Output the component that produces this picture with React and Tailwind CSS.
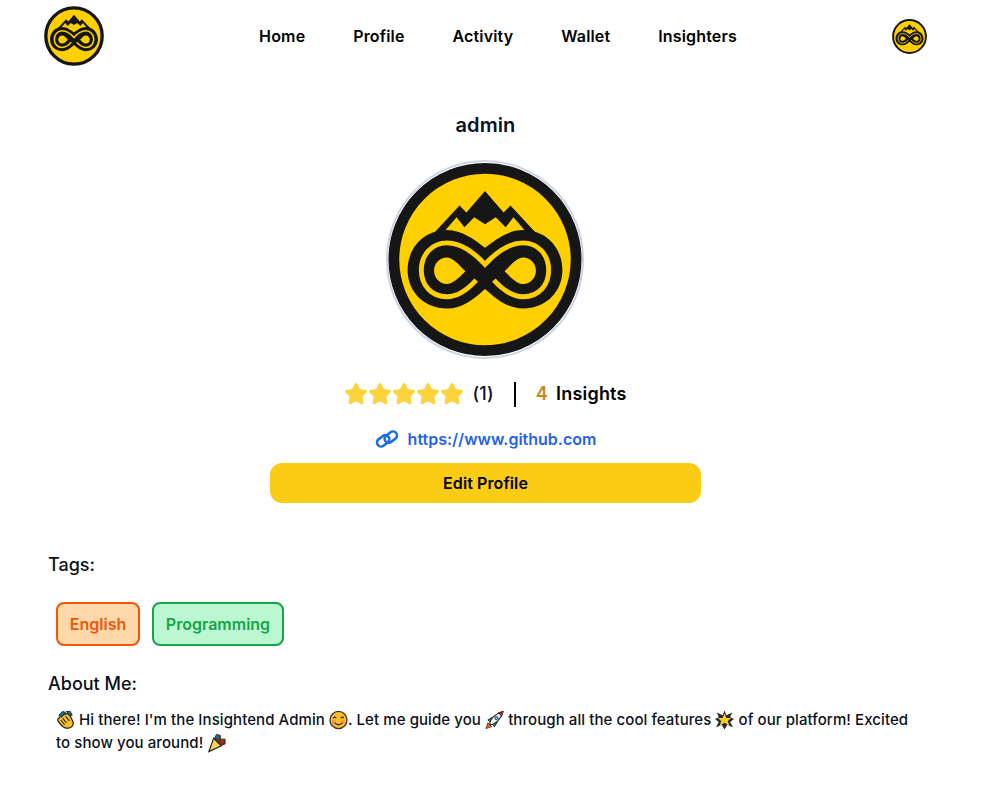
import React from "react";
import { Star } from "lucide-react";

const navLinks = ["Home", "Profile", "Activity", "Wallet", "Insighters"];

const Logo = ({ className }) => (
  <svg viewBox="0 0 198 198" className={className}>
    <circle cx="99" cy="99" r="93" fill="#ffd000" stroke="#161616" strokeWidth="11" />
    {/* mountain */}
    <path d="M46 73 L73 44 L80 51 L99 29 L118 51 L125 44 L152 73 L140 85 L58 85 Z" fill="#161616" />
    <path d="M57 71 L70 56 L78 66 L88 56 L99 63 L110 56 L120 66 L128 56 L141 71 L141 95 L57 95 Z" fill="#ffd000" />
    {/* infinity */}
    <path d="M99 87 C88 79 76 69 60 69 C37 69 20 87 20 110 C20 132 37 149 60 149 C76 149 88 139 99 129 C110 139 122 149 138 149 C161 149 178 132 178 110 C178 87 161 69 138 69 C122 69 110 79 99 87 Z" fill="#161616" />
    <path d="M90 120 C80 131 71 137 60 137 C44 137 34 125 34 110 C34 94 45 82 60 82 C74 82 88 92 99 104 C110 92 124 82 138 82 C153 82 164 94 164 110 C164 125 154 137 138 137 C127 137 118 131 108 120" fill="none" stroke="#ffd000" strokeWidth="5" />
    <path d="M79 111 C72 104 66 97 60 97 C53 97 47 103 47 110.5 C47 118 53 124 60 124 C66 124 72 118 79 111 Z" fill="#ffd000" />
    <path d="M119 111 C126 104 132 97 138 97 C145 97 151 103 151 110.5 C151 118 145 124 138 124 C132 124 126 118 119 111 Z" fill="#ffd000" />
  </svg>
);

const emojiClass = "inline-block h-5 w-[19px] align-[-5px]";

const Wave = () => (
  <svg viewBox="0 0 20 20" className={emojiClass}>
    <path d="M2 9 L6 5 L9 4 L12 3 L15 6 L18 12 C19 17 14 20 9 18 C6 17 4 14 2 11 Z" fill="#fbbf24" stroke="#222" strokeWidth="1.3" />
    <path d="M3 5 L7 1 L10 2 L6 7 Z" fill="#0e7490" stroke="#222" strokeWidth="1" />
    <path d="M11 1 L15 1 L17 5 L14 5 Z" fill="#0e7490" stroke="#222" strokeWidth="1" />
    <path d="M7 8 L11 13 M5 10 L9 15 M10 6 L14 11" stroke="#222" strokeWidth="1.1" />
  </svg>
);

const Smile = () => (
  <svg viewBox="0 0 20 20" className={emojiClass}>
    <circle cx="10" cy="10" r="9" fill="#fbbf24" stroke="#333" strokeWidth="1.3" />
    <circle cx="5" cy="12" r="2" fill="#fb923c" />
    <circle cx="15" cy="12" r="2" fill="#fb923c" />
    <path d="M4.5 8 Q6 6 7.5 8 M12.5 8 Q14 6 15.5 8 M6 13 Q10 17 14 13" fill="none" stroke="#222" strokeWidth="1.3" />
  </svg>
);

const Rocket = () => (
  <svg viewBox="0 0 20 20" className={emojiClass}>
    <path d="M1 19 L3 13 L7 17 Z" fill="#f97316" stroke="#222" strokeWidth="0.8" />
    <path d="M3 10 L8 7 L13 12 L10 17 Z" fill="#2f7fc4" stroke="#222" strokeWidth="1" />
    <path d="M5 15 C5 9 11 3 19 1 C17 9 11 15 5 15 Z" fill="#f3f4f6" stroke="#222" strokeWidth="1.1" />
    <path d="M14 2.6 L19 1 L17.6 6 Z" fill="#dc2626" stroke="#222" strokeWidth="0.8" />
    <circle cx="12" cy="8" r="1.7" fill="#38bdf8" stroke="#222" strokeWidth="0.7" />
  </svg>
);

const Burst = () => (
  <svg viewBox="0 0 20 20" className={emojiClass}>
    <path d="M10 0 L12 5 L18 2 L16 7 L20 9 L16 12 L19 18 L13 15 L10 20 L7 15 L1 18 L4 12 L0 9 L4 7 L2 2 L8 5 Z" fill="#1f2937" />
    <path d="M10 3 L12 8 L17 8 L13.5 11 L15 16 L10 13 L5 16 L6.5 11 L3 8 L8 8 Z" fill="#facc15" />
  </svg>
);

const Party = () => (
  <svg viewBox="0 0 20 20" className={emojiClass}>
    <path d="M8 5 L10 1 L14 2 L14 6 L19 6 L19 11 L14 13 Z" fill="#7c2d12" stroke="#222" strokeWidth="1" />
    <path d="M2 19 L7 5 L15 13 Z" fill="#fcd34d" stroke="#222" strokeWidth="1.2" />
    <circle cx="11" cy="3.5" r="2" fill="#0e7490" />
    <circle cx="16" cy="8" r="1.4" fill="#dc2626" />
  </svg>
);

const App = () => {
  return (
    <div className="min-h-[787px] w-[971px] bg-white font-['Inter',sans-serif] text-[#0b1120]">
      {/* Navbar */}
      <nav className="flex h-[72px] items-center justify-between px-[44px]">
        <Logo className="h-[60px] w-[60px]" />
        <ul className="flex gap-12 text-base font-semibold tracking-[0.15px] text-black">
          {navLinks.map((link) => (
            <li key={link}>{link}</li>
          ))}
        </ul>
        <Logo className="h-[35px] w-[35px]" />
      </nav>

      {/* Profile */}
      <div className="flex flex-col items-center">
        <h2 className="mt-[39px] text-xl leading-7 font-semibold tracking-[0.1px]">admin</h2>
        <div className="mt-[21px] mr-[1px] h-[199px] w-[198px] rounded-full border-2 border-[#cbd5e1]">
          <Logo className="h-full w-full" />
        </div>
        <div className="mt-[21px] flex h-7 items-center tracking-[0.2px]">
          <div className="flex">
            {[1, 2, 3, 4, 5].map((i) => (
              <Star key={i} size={24} fill="#fdd33c" stroke="#fdd33c" strokeWidth={2} />
            ))}
          </div>
          <span className="ml-2 text-lg font-medium">(1)</span>
          <span className="ml-5 mr-5 h-[25px] w-[2px] bg-black" />
          <span className="text-lg font-semibold text-[#c9861a]">4</span>
          <span className="ml-2 text-lg font-semibold text-black">Insights</span>
        </div>
        <div className="mt-[19px] flex h-6 items-center gap-[9px] text-base font-semibold text-[#2563eb]">
          <svg viewBox="0 0 24 18" className="h-[18px] w-6" fill="none" stroke="#1d6ee0" strokeWidth="2.6">
            <rect x="1.5" y="7" width="13.5" height="8" rx="4" transform="rotate(-38 8 11)" />
            <rect x="9" y="3" width="13.5" height="8" rx="4" transform="rotate(-38 16 7)" />
          </svg>
          https://www.github.com
        </div>
        <button className="mt-3 h-10 w-[431px] rounded-xl bg-[#facc15] text-base font-semibold tracking-[0.1px] text-black">
          Edit Profile
        </button>
      </div>

      {/* Tags */}
      <div className="mt-[48px] px-12">
        <h3 className="text-lg leading-7 font-medium">Tags:</h3>
        <div className="mt-[23px] flex gap-3 pl-2">
          <span className="flex h-11 w-[84px] items-center justify-center rounded-lg border-2 border-[#ea580c] bg-[#fed7aa] font-semibold text-[#ea580c]">
            English
          </span>
          <span className="flex h-11 w-[132px] items-center justify-center rounded-lg border-2 border-[#16a34a] bg-[#bbf7d0] font-semibold text-[#16a34a]">
            Programming
          </span>
        </div>
        <h3 className="mt-6 text-lg leading-7 font-medium">About Me:</h3>
        <p className="mt-[10px] pl-2 text-[15px] leading-[23px] font-medium tracking-[0.08px]">
          <Wave /> Hi there! I'm the Insightend Admin <Smile />. Let me guide you <Rocket /> through all the cool features <Burst /> of our platform! Excited to show you around! <Party />
        </p>
      </div>
    </div>
  );
};

export default App;
